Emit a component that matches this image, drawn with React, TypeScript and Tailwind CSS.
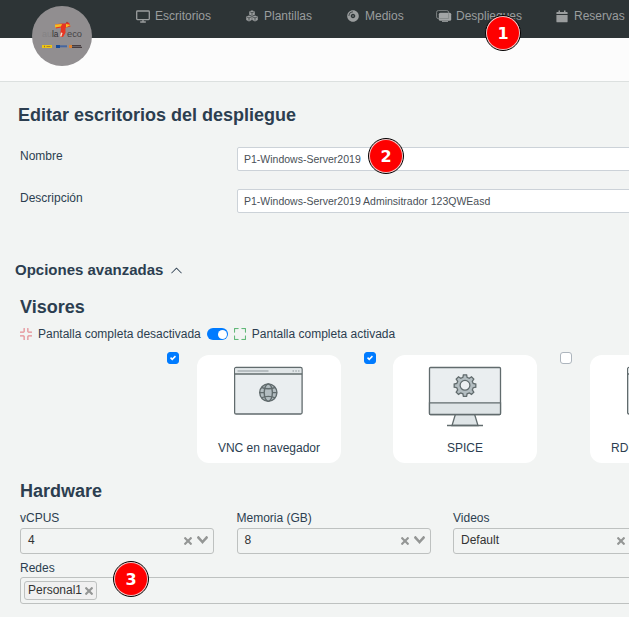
import type { ReactNode } from 'react';
import { BsChevronUp, BsFullscreen, BsFullscreenExit } from 'react-icons/bs';
import { FaCompactDisc } from 'react-icons/fa';

function Logo() {
  return (
    <svg viewBox="0 0 60 60" className="absolute left-8 top-[6px] h-[60px] w-[60px]">
      <circle cx="30" cy="30" r="30" fill="#918e90" />
      <g fontFamily="Liberation Sans, sans-serif" fontSize="8.5">
        <text x="10" y="31" fill="#858385" textLength="10" lengthAdjust="spacingAndGlyphs">au</text>
        <text x="20" y="31" fill="#343234" textLength="6.5" lengthAdjust="spacingAndGlyphs">la</text>
        <text x="35" y="31" fill="#464446" textLength="15" lengthAdjust="spacingAndGlyphs">eco</text>
      </g>
      <path d="M23 18.5q6-1.5 10-1l4-1 1.500 4-5 1.200v5l-2.500 4.300h-3l1-9.500-5 1Z" fill="#e73522" />
      <path d="M23 18.500l7-.500-1 2.500-6 1ZM34 18l4.500 1-4.500 2.500Z" fill="#f5bd22" />
      <path d="m29 26.500 1.500.500-1 3.500h-1.500Z" fill="#f1dfcb" />
      <circle cx="35" cy="16.5" r=".8" fill="#ac3028" />
      <path d="M10 39h10v3H10Z" fill="#edc613" />
      <path d="M12 39.8h1v1.4h-1M14.5 40.2h4v.7h-4" fill="#a36f25" />
      <path d="M24 39h4v3h-4Z" fill="#164c9a" />
      <path d="M28 39.300h7v2h-7" fill="#4566a0" />
      <path d="M37 39h3v3h-3Z" fill="#df812e" />
      <path d="M40 39h9v1.200h-9M40 40.800h10v1.100H40" fill="#473d40" />
    </svg>
  );
}

function DesktopIcon() {
  return (
    <svg viewBox="0 0 14 13" className="h-[13px] w-[14px]" fill="none" stroke="currentColor" strokeWidth="1.3">
      <rect x=".7" y="1" width="12.6" height="8.6" rx=".8" />
      <path d="M7 9.600v2M4.200 12h5.600" />
    </svg>
  );
}

function CubesIcon() {
  return (
    <svg viewBox="0 0 12 12" className="h-3 w-3" fill="currentColor">
      <path d="M6 .3 8.8 1.4v3.4L6 6.1 3.2 4.8V1.4ZM3 5.4l2.8 1.2V10L3 11.4.2 10V6.6ZM9 5.4l2.8 1.2V10L9 11.4 6.2 10V6.6Z" />
      <path d="m3.8 1.8 2.2.9 2.2-.9M6 2.7v2.8M.8 7l2.2.9L5.2 7M3 7.9v2.8M6.8 7l2.2.9 2.2-.9M9 7.9v2.8" fill="none" stroke="#2d3436" strokeWidth=".65" />
    </svg>
  );
}

function DeployIcon() {
  return (
    <svg viewBox="0 0 16 13" className="h-[13px] w-4">
      <rect x=".6" y=".6" width="12" height="8" rx="1.7" fill="none" stroke="#7d8283" />
      <rect x="2.8" y="2.8" width="12.4" height="8" rx="1.5" fill="#a2a5a6" />
      <path d="M3.3 8.500h9.300V3.300" fill="none" stroke="#7d8283" strokeWidth=".7" />
      <path d="M6 11.500h6" stroke="#8b8f90" />
    </svg>
  );
}

function CalendarIcon() {
  return (
    <svg viewBox="0 0 12 13" className="h-[13px] w-3" fill="currentColor">
      <path d="M2.5.5H4V2h4V.5h1.5V2H11q.6 0 .6.6V4H.4V2.6Q.4 2 1 2h1.5ZM.4 5h11.2v6.4q0 .9-.9.9H1.3q-.9 0-.9-.9Z" />
    </svg>
  );
}

function NavItem({ icon, label, className }: { icon: ReactNode; label: string; className: string }) {
  return (
    <div className={`flex shrink-0 items-center ${className}`}>
      {icon}
      <span>{label}</span>
    </div>
  );
}

function Step({ n, className }: { n: number; className: string }) {
  return (
    <div className={`absolute flex h-9 w-9 items-center justify-center rounded-full border-[1.5px] border-black bg-[#f6c4c4] p-px ${className}`}>
      <div className="flex h-full w-full items-center justify-center rounded-full bg-[#fe0000] pt-px font-['DejaVu_Sans',sans-serif] text-[16px] font-bold leading-none text-white">{n}</div>
    </div>
  );
}

function Field({ label, value }: { label: string; value: string }) {
  return (
    <div className="flex h-[42px] pl-5">
      <div className="w-[217px] shrink-0 leading-[18px]">{label}</div>
      <div className="flex h-6 w-[420px] shrink-0 items-center rounded-[2px] border border-[#ccd2d8] bg-white px-[6px] pt-px text-[10.5px] text-[#495057]">{value}</div>
    </div>
  );
}

function ClearIcon() {
  return (
    <svg viewBox="0 0 10 10" className="h-2 w-2 shrink-0" fill="#949695">
      <path d="M6.895 5l2.843-2.843c.349-.349.349-.914 0-1.263L9.107.262c-.349-.349-.915-.349-1.264 0L5 3.105 2.157.262c-.349-.349-.914-.349-1.263 0L.262.893c-.349.349-.349.915 0 1.264L3.105 5 .262 7.843c-.349.349-.349.914 0 1.263l.632.632c.349.349.914.349 1.263 0L5 6.895l2.843 2.843c.349.349.915.349 1.264 0l.631-.632c.349-.349.349-.914 0-1.263Z" />
    </svg>
  );
}

function Select({ label, value }: { label: string; value: string }) {
  return (
    <div className="w-[194px] shrink-0">
      <div className="h-[18px] leading-[18px]">{label}</div>
      <div className="mt-px flex h-[26px] items-center rounded-[3px] border border-[#bec1c0] pl-[7px] pr-[5px] text-[#333]">
        <span className="flex-1 pb-[2px]">{value}</span>
        <span className="mr-[5px]"><ClearIcon /></span>
        <svg viewBox="0 0 14 10" className="mb-[2px] h-2 w-[11px] shrink-0" fill="#949695">
          <path d="M9.211 7.599l4.484-4.867c.407-.442.407-1.158 0-1.6l-.737-.8c-.407-.442-1.067-.442-1.475 0L7 5.199 2.517.331c-.407-.442-1.067-.442-1.475 0l-.737.8c-.407.442-.407 1.159 0 1.601l4.484 4.867L7 10Z" />
        </svg>
      </div>
    </div>
  );
}

function Check({ on }: { on: boolean }) {
  return (
    <div className={`mt-[-3px] flex h-3 w-3 shrink-0 items-center justify-center rounded-[3px] border ${on ? 'border-[#007bff] bg-[#007bff]' : 'border-[#adb5bd] bg-white'}`}>
      {on && (
        <svg viewBox="0 0 8 8" className="h-[6px] w-[6px]" fill="#fff">
          <path d="M6.564.75l-3.59 3.612-1.538-1.55L0 4.26l2.974 2.99L8 2.193z" />
        </svg>
      )}
    </div>
  );
}

function BrowserArt() {
  return (
    <svg viewBox="0 0 70 50" className="h-[50px] w-[70px]" fill="#eaeef0" stroke="#616b6d" strokeWidth="1.3">
      <rect x=".6" y="1.500" width="67.500" height="46.500" rx="1.5" />
      <path d="M1.200 2.200h66v5.300h-66Z" fill="#e1e6e8" stroke="none" />
      <path d="M.6 8h67.500" />
      <path d="M3.500 5h31" stroke="#b7bec1" strokeWidth="2" />
      <path d="M58.500 5h7" stroke="#b7bec1" strokeWidth="2" strokeDasharray="1.5 1.3" />
      <g fill="#b3bdc1" strokeWidth="1.4" transform="translate(-.7 .3)">
        <circle cx="35" cy="26.3" r="8.6" />
        <ellipse cx="35" cy="26.3" rx="4.1" ry="8.6" />
        <path d="M26.4 26.3h4.5M39.1 26.3h4.5M28 21q7 3 14 0M28 31.6q7-3 14 0" fill="none" />
      </g>
    </svg>
  );
}

function MonitorArt() {
  return (
    <svg viewBox="0 0 74 62" className="h-[62px] w-[74px]" stroke="#616b6d" strokeWidth="1.3">
      <path d="M27.5 48h19l3.5 11.5H24Z" fill="#dfe5e7" />
      <path d="M19 59.5h36" />
      <rect x="1.5" y="1.5" width="71" height="47" rx="1" fill="#eaeef0" />
      <path d="M1.5 36.8h71v10.7q0 1-1 1h-69q-1 0-1-1Z" fill="#dfe5e7" />
      <path d="M35.4 8.8h3.2l.5 2.6 2.2.9 2.2-1.5 2.3 2.3-1.5 2.2.9 2.2 2.6.5v3.2l-2.6.5-.9 2.2 1.5 2.2-2.3 2.3-2.2-1.5-2.2.9-.5 2.6h-3.2l-.5-2.6-2.2-.9-2.2 1.5-2.3-2.3 1.5-2.2-.9-2.2-2.6-.5V18l2.6-.5.9-2.2-1.5-2.2 2.3-2.3 2.2 1.5 2.2-.9Z" fill="#b3bdc1" />
      <circle cx="37" cy="19.3" r="4.9" fill="#edf0f2" />
    </svg>
  );
}

function Viewer({ on, label, art, className }: { on: boolean; label: string; art: ReactNode; className: string }) {
  return (
    <div className={`flex shrink-0 ${className}`}>
      <Check on={on} />
      <div className="flex h-[108px] w-36 flex-col items-center rounded-[12px] bg-white">
        <div className="h-[84px] pt-[11px]">{art}</div>
        <div className="whitespace-nowrap leading-[18px]">{label}</div>
      </div>
    </div>
  );
}

export default function App() {
  return (
    <div className="relative h-[617px] w-[629px] overflow-hidden bg-[#f2f4f3] font-['Liberation_Sans',Arial,sans-serif] text-[12px] text-[#2c3e50]">
      <header className="h-[82px] border-b border-[#dce0df] bg-[#fcfcfc]">
        <nav className="flex h-[38px] bg-[#2d3436] pb-[6px] pl-[136px] text-[#9a9d9e]">
          <NavItem className="w-[110px] gap-[5px]" icon={<DesktopIcon />} label="Escritorios" />
          <NavItem className="w-[101px] gap-[6px]" icon={<CubesIcon />} label="Plantillas" />
          <NavItem className="w-[89px] gap-[6px]" icon={<FaCompactDisc className="h-3 w-3" />} label="Medios" />
          <NavItem className="w-[120px] gap-1" icon={<DeployIcon />} label="Despliegues" />
          <NavItem className="gap-[6px]" icon={<CalendarIcon />} label="Reservas" />
        </nav>
      </header>
      <Logo />

      <main>
        <h1 className="h-[65px] pl-[18px] pt-[22px] text-[18px] font-bold leading-[22px]">Editar escritorios del despliegue</h1>
        <Field label="Nombre" value="P1-Windows-Server2019" />
        <Field label="Descripción" value="P1-Windows-Server2019 Adminsitrador 123QWEasd" />

        <button className="flex h-[64px] items-end gap-[7px] pl-[15px] pb-4 text-[15px] font-bold leading-[18px]">
          Opciones avanzadas
          <BsChevronUp className="mb-[2px] h-[13px] w-[13px]" />
        </button>

        <h2 className="h-[31px] pl-5 pt-px text-[18px] font-bold leading-[22px]">Visores</h2>
        <div className="flex h-4 items-center pl-5">
          <BsFullscreenExit className="h-3 w-3 stroke-[0.5] text-[#e5878d]" />
          <span className="ml-[6px]">Pantalla completa desactivada</span>
          <span className="ml-[6px] flex h-3 w-[21px] items-center justify-end rounded-full bg-[#007bff] pr-px">
            <span className="h-[9px] w-[9px] rounded-full bg-white" />
          </span>
          <BsFullscreen className="ml-[6px] h-3 w-3 stroke-[0.3] text-[#45ad60]" />
          <span className="ml-[6px]">Pantalla completa activada</span>
        </div>
        <div className="flex h-[124px] pl-[167px] pt-[13px]">
          <Viewer on className="w-[197px] gap-[18px]" label="VNC en navegador" art={<BrowserArt />} />
          <Viewer on className="w-[196px] gap-[17px]" label="SPICE" art={<MonitorArt />} />
          <Viewer on={false} className="w-[197px] gap-[18px]" label="RDP en navegador" art={<BrowserArt />} />
        </div>

        <h2 className="h-[43px] pl-5 pt-[14px] text-[18px] font-bold leading-[22px]">Hardware</h2>
        <div className="flex gap-[22.5px] pl-5">
          <Select label="vCPUS" value="4" />
          <Select label="Memoria (GB)" value="8" />
          <Select label="Videos" value="Default" />
        </div>
        <div className="pl-5 pt-[5px]">
          <div className="h-[18px] leading-[19px]">Redes</div>
          <div className="flex h-[27px] w-[640px] items-center rounded-[3px] border border-[#bec1c0] pl-[3px]">
            <span className="flex h-[19px] w-[73px] items-center gap-[3px] rounded-[3px] border border-[#bec1c0] bg-[#f0f0f0] pl-[3px] text-[#333]">
              <span className="pb-px">Personal1</span>
              <ClearIcon />
            </span>
          </div>
        </div>
      </main>

      <Step n={1} className="left-[485px] top-[15px]" />
      <Step n={2} className="left-[368px] top-[138px]" />
      <Step n={3} className="left-[113px] top-[561px]" />
    </div>
  );
}
